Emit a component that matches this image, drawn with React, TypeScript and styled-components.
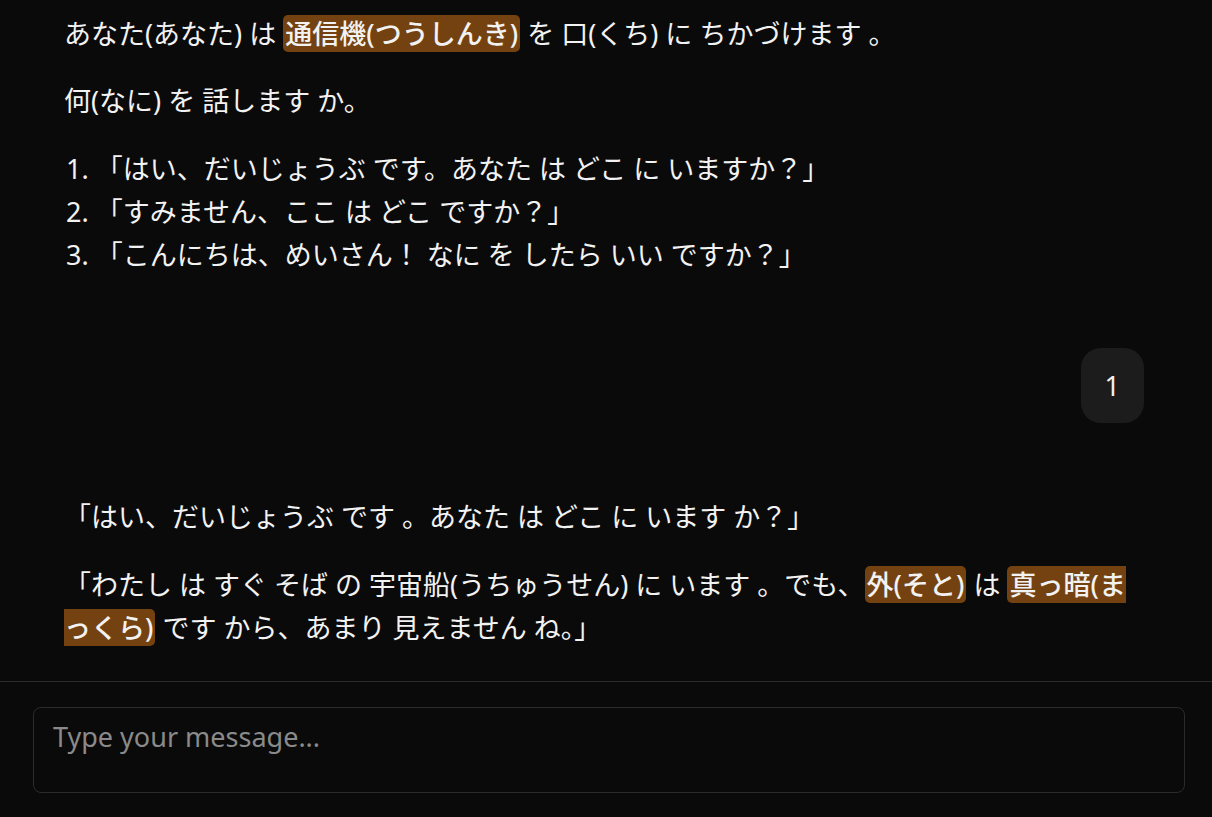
import React from 'react';
import styled, { createGlobalStyle } from 'styled-components';

const colors = {
  page: '#0a0a0a',
  text: '#f2f2f2',
  muted: '#8a8a8a',
  line: '#2b2b2b',
  bubble: '#1c1c1c',
  mark: '#744210',
};

const GlobalStyle = createGlobalStyle`
  html, body {
    margin: 0;
    padding: 0;
    background: ${colors.page};
  }
  body {
    font-family: "Noto Sans", "Noto Sans CJK JP", sans-serif;
    color: ${colors.text};
  }
  * {
    box-sizing: border-box;
  }
`;

const Page = styled.div`
  height: 100vh;
  display: flex;
  flex-direction: column;
  background: ${colors.page};
`;

const ChatArea = styled.div`
  flex: 1;
  min-height: 0;
  overflow: hidden;
  display: flex;
  flex-direction: column;
  justify-content: flex-end;
  gap: 72px;
  padding: 11px 68px 32px 64px;
`;

const AssistantMessage = styled.div`
  font-size: 27px;
  line-height: 43.2px;

  p {
    margin: 0 0 24px;
  }
  p:last-child {
    margin-bottom: 0;
  }
`;

const NumberedList = styled.ol`
  margin: 0;
  padding: 0;
  list-style-position: inside;

  li {
    padding-left: 2px;
  }
`;

const Mark = styled.strong`
  background: ${colors.mark};
  font-weight: 500;
  border-radius: 5px;
  padding: 0 2px;
`;

const UserRow = styled.div`
  display: flex;
  justify-content: flex-end;
`;

const UserBubble = styled.div`
  background: ${colors.bubble};
  border-radius: 20px;
  padding: 16px 24px;
  font-size: 27px;
  line-height: 43.2px;
`;

const Composer = styled.div`
  border-top: 1px solid ${colors.line};
  padding: 25px 27px 24px 33px;
`;

const MessageInput = styled.textarea`
  display: block;
  width: 100%;
  height: 86px;
  resize: none;
  background: transparent;
  border: 1px solid ${colors.line};
  border-radius: 8px;
  padding: 7px 19px;
  font-family: inherit;
  font-size: 27px;
  line-height: 43.2px;
  color: ${colors.text};
  outline: none;

  &::placeholder {
    color: ${colors.muted};
  }
`;

const App: React.FC = () => (
  <Page>
    <GlobalStyle />
    <ChatArea>
      <AssistantMessage>
        <p>
          あなた(あなた) は <Mark>通信機(つうしんき)</Mark> を 口(くち) に ちかづけます 。
        </p>
        <p>何(なに) を 話します か。</p>
        <NumberedList>
          <li>「はい、だいじょうぶ です。あなた は どこ に いますか？」</li>
          <li>「すみません、ここ は どこ ですか？」</li>
          <li>「こんにちは、めいさん！ なに を したら いい ですか？」</li>
        </NumberedList>
      </AssistantMessage>

      <UserRow>
        <UserBubble>1</UserBubble>
      </UserRow>

      <AssistantMessage>
        <p>「はい、だいじょうぶ です 。あなた は どこ に います か？」</p>
        <p>
          「わたし は すぐ そば の 宇宙船(うちゅうせん) に います 。でも、<Mark>外(そと)</Mark> は{' '}
          <Mark>真っ暗(まっくら)</Mark> です から、あまり 見えません ね。」
        </p>
      </AssistantMessage>
    </ChatArea>

    <Composer>
      <MessageInput placeholder="Type your message..." />
    </Composer>
  </Page>
);

export default App;
